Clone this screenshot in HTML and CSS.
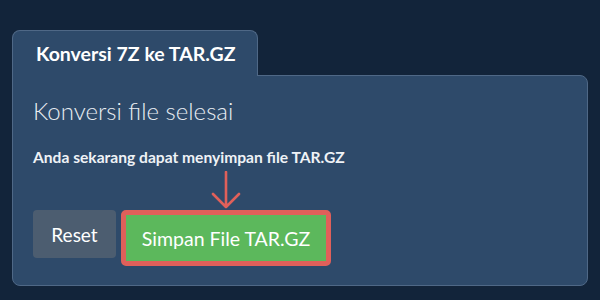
FILE: index.html
```html
<!DOCTYPE html>
<html lang="id">
<head>
  <meta charset="UTF-8" />
  <title>Konversi 7Z ke TAR.GZ</title>
  <link rel="stylesheet" href="styles.css">
</head>
<body>
  <div class="converter">
    <div class="tab">Konversi 7Z ke TAR.GZ</div>
    <div class="panel">
      <h2 class="done-title">Konversi file selesai</h2>
      <p class="done-text">Anda sekarang dapat menyimpan file TAR.GZ</p>
      <div class="actions">
        <button class="btn reset-btn">Reset</button>
        <div class="save-wrap">
          <svg class="arrow" width="30" height="39" viewBox="0 0 30 39">
            <path d="M15 1 V36 M2 23 L15 36 L28 23" fill="none" stroke="#e0605a" stroke-width="2.6" stroke-linecap="round" stroke-linejoin="round"/>
          </svg>
          <button class="btn save-btn">Simpan File TAR.GZ</button>
        </div>
      </div>
    </div>
  </div>
</body>
</html>
```

FILE: styles.css
```css
body {
  margin: 0;
  background: #12243a;
  font-family: Lato, 'Open Sans', sans-serif;
  color: #eef2f6;
}

.converter {
  padding: 30px 12px 12px;
}

.tab {
  box-sizing: border-box;
  width: 246px;
  position: relative;
  z-index: 1;
  background: #2e4a6a;
  border: 1px solid #4f6886;
  border-bottom: none;
  border-radius: 8px 8px 0 0;
  padding: 11px 0 10px 23px;
  margin-bottom: -1px;
  font-size: 19.5px;
  font-weight: 700;
  line-height: 24px;
  color: #fff;
}

.panel {
  box-sizing: border-box;
  width: 576px;
  background: #2e4a6a;
  border: 1px solid #4f6886;
  border-radius: 0 8px 8px 8px;
  padding: 20px 20px 19px;
  white-space: nowrap;
}

.done-title {
  margin: 0;
  font-size: 24px;
  font-weight: 300;
  line-height: 29px;
  color: #e8edf2;
}

.done-text {
  margin: 22px 0 0;
  font-size: 15.6px;
  font-weight: 700;
  line-height: 20px;
}

.actions {
  display: flex;
  align-items: flex-start;
  margin-top: 4px;
}

.btn {
  font-family: inherit;
  border: none;
  color: #fff;
  cursor: pointer;
  padding: 0;
}

.reset-btn {
  flex-shrink: 0;
  margin-top: 39px;
  width: 83px;
  height: 48px;
  background: #4c5d70;
  border-radius: 4px;
  font-size: 19px;
}

.save-wrap {
  display: flex;
  flex-direction: column;
  align-items: center;
  margin-left: 5px;
}

.arrow {
  display: block;
}

.save-btn {
  width: 210px;
  height: 56px;
  background: #5cb85c;
  border: 5px solid #e0605a;
  border-radius: 5px;
  font-size: 19.5px;
}
```
